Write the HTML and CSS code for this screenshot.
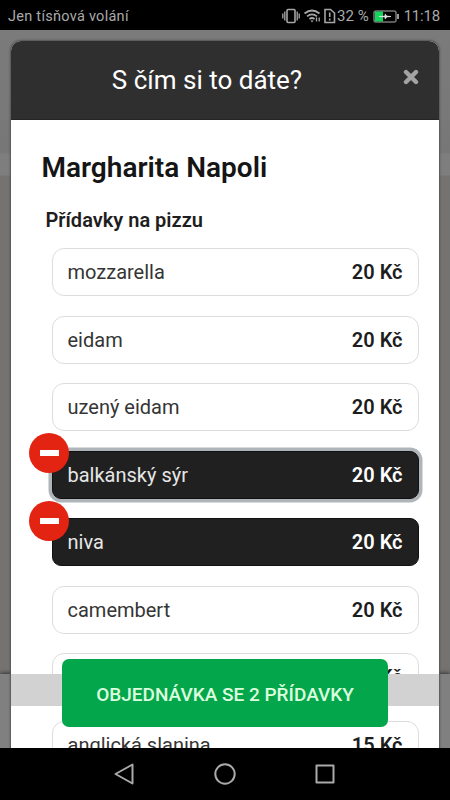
FILE: index.html
```html
<!DOCTYPE html>
<html lang="cs">
<head>
<meta charset="utf-8">
<title>S čím si to dáte?</title>
<link rel="stylesheet" href="styles.css">
</head>
<body>
<div class="screen">
  <header class="status">
    <span class="carrier">Jen tísňová volání</span>
    <div class="status-right">
      <svg class="st-icons" width="54" height="16" viewBox="0 0 54 16" fill="none" stroke="#a6a6a6" stroke-width="1.6">
        <rect x="5" y="1.5" width="8" height="13" rx="1"/>
        <path d="M2.8 3.5v9M.8 5.5v5M15.2 3.5v9M17.2 5.5v5" stroke-width="1.3"/>
        <path d="M22.500 5.500q7.500-6 15 0M25 8.300q5-4 10 0M27.500 11q2.500-2 5 0" stroke-width="1.700"/>
        <path d="M28.500 12.500h3L30 14.500z" fill="#a6a6a6" stroke="none"/>
        <path d="M34.500 9.500v4M37.200 9.500v4" stroke-width="1.300"/>
        <path d="M43 1.500h5.500l4 3.500v9.500H43z"/>
        <path d="M47.700 4.500v4.500M47.700 10.500v2"/>
      </svg>
      <span class="percent">32 %</span>
      <svg class="battery" width="27" height="13" viewBox="0 0 27 13">
        <rect x="1" y="1" width="22" height="11" rx="2" fill="none" stroke="#777" stroke-width="1.500"/>
        <path d="M2 1.500h8v10H2z" fill="#13d45c"/>
        <path d="M25 4v5" stroke="#999" stroke-width="2"/>
        <path d="M6 6l5.500-.3.500-2.200 2 2.200 4 .3v1l-4 .3-2 2.200-.5-2.200L6 7z" fill="#ddd"/>
      </svg>
      <span class="clock">11:18</span>
    </div>
  </header>
  <main class="page">
    <section class="modal">
      <div class="modal-head">
        <h1>S čím si to dáte?</h1>
        <svg class="close" width="16" height="16" viewBox="0 0 16 16"><path d="M3 3l10 10M13 3L3 13" stroke="#a3a3a3" stroke-width="4.400" stroke-linecap="round"/></svg>
      </div>
      <div class="modal-body">
        <h2>Margharita Napoli</h2>
        <h3>Přídavky na pizzu</h3>
        <ul class="options">
          <li><span>mozzarella</span><b>20 Kč</b></li>
          <li><span>eidam</span><b>20 Kč</b></li>
          <li><span>uzený eidam</span><b>20 Kč</b></li>
          <li class="on focus"><i class="remove"></i><span>balkánský sýr</span><b>20 Kč</b></li>
          <li class="on"><i class="remove"></i><span>niva</span><b>20 Kč</b></li>
          <li><span>camembert</span><b>20 Kč</b></li>
          <li><span></span><b>20 Kč</b></li>
          <li><span>anglická slanina</span><b>15 Kč</b></li>
        </ul>
      </div>
    </section>
    <div class="footer-shade"></div>
    <div class="strip"></div>
    <button class="order">OBJEDNÁVKA SE 2 PŘÍDAVKY</button>
  </main>
  <nav class="nav">
    <svg width="22" height="24" viewBox="0 0 22 24"><path d="M19.500 2.500v19L2.500 12z"/></svg>
    <svg width="24" height="24" viewBox="0 0 24 24"><circle cx="12" cy="12" r="9.700"/></svg>
    <svg width="20" height="20" viewBox="0 0 20 20"><rect x="1.500" y="1.500" width="17" height="17"/></svg>
  </nav>
</div>
</body>
</html>
```
FILE: styles.css
```css
* { box-sizing: border-box; }
body { margin: 0; font-family: Roboto, "Noto Sans", sans-serif; }
h1, h2, h3, ul { margin: 0; padding: 0; }
.screen { width: 450px; height: 800px; display: flex; flex-direction: column; overflow: hidden; background: #000; }
.status { height: 30px; flex: none; display: flex; justify-content: space-between; align-items: center; padding: 2px 10px 0 8px; color: #aaa; font-size: 14.5px; }
.carrier { letter-spacing: .27px; }
.status-right { display: flex; align-items: center; }
.percent { margin-left: 1px; font-size: 15px; white-space: nowrap; }
.battery { margin-left: 4px; }
.clock { margin-left: 4px; font-size: 15px; letter-spacing: -.2px; }
.page { position: relative; height: 718px; flex: none; overflow: hidden; padding: 11px 11px 0; background: linear-gradient(#7b7b7b 0, #777 123px, #7e7e7e 124px, #7e7e7e 145px, #757371 146px); }
.modal { position: relative; z-index: 2; height: 760px; border-radius: 10px 10px 0 0; background: #fff; box-shadow: 0 0 2px 1px #555; overflow: hidden; }
.modal-head { height: 79px; background: #2f2f2f; border-bottom: 1px solid #252525; position: relative; }
h1 { text-align: center; color: #fff; font-size: 26px; font-weight: 400; line-height: 79px; padding-right: 36px; }
.close { position: absolute; right: 20px; top: 28px; }
.modal-body { padding: 30px 20.5px 0 30.5px; }
h2 { font-size: 28px; line-height: 36px; font-weight: 600; color: #151515; }
h3 { font-size: 20px; line-height: 26px; font-weight: 600; color: #1e1e1e; margin: 21px 0 0 4px; }
.options { list-style: none; margin: 15px 0 0 10px; display: flex; flex-direction: column; gap: 19.5px; }
li { position: relative; height: 48px; display: flex; flex: none; align-items: center; justify-content: space-between; padding: 0 15px; border: 1px solid #ddd; border-radius: 12px; font-size: 20px; color: #353535; }
li b { font-weight: 600; color: #1d1d1d; }
.on { background: #202020; border-color: #111; border-radius: 9px; color: #e6e6e6; }
.on b { color: #fff; }
.focus { box-shadow: 0 0 0 3.5px #b0b5ba; }
.remove { position: absolute; left: -23.5px; top: -18.5px; width: 40px; height: 40px; border-radius: 50%; background: #e32412; display: grid; place-items: center; }
.remove::after { content: ""; width: 19px; height: 6px; background: #fff; }
.footer-shade { position: absolute; z-index: 1; left: 0; right: 0; top: 644px; bottom: 0; background: #808080; box-shadow: 0 -1px 4px #333; }
.strip { position: absolute; z-index: 3; left: 11px; right: 11px; top: 644px; height: 32px; background: #d2d2d2; }
.order { position: absolute; z-index: 4; left: 62px; top: 629px; width: 326px; height: 68px; padding: 2px 0 0; border: 0; border-radius: 7px; background: #03a64a; color: #dcffdf; font: 500 19px Roboto, sans-serif; white-space: nowrap; }
.nav { flex: 1; display: flex; justify-content: center; align-items: center; gap: 78px; padding-right: 2px; background: #000; }
.nav svg { fill: none; stroke: #aaa; stroke-width: 2; stroke-linejoin: round; }
```
